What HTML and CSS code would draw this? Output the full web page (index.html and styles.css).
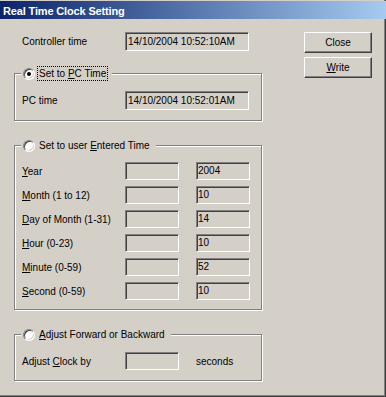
FILE: index.html
```html
<!DOCTYPE html>
<html>
<head>
<meta charset="utf-8">
<title>Real Time Clock Setting</title>
<link rel="stylesheet" href="styles.css">
</head>
<body>
<div class="window">
  <div class="titlebar">Real Time Clock Setting</div>
  <div class="content">
    <div class="main">
      <div class="row ctrl">
        <span class="lbl">Controller time</span>
        <div class="tb wide">14/10/2004 10:52:10AM</div>
      </div>

      <div class="group g1">
        <div class="legend">
          <span class="radio checked"></span>
          <span class="rlabel focus">Set to <u>P</u>C Time</span>
        </div>
        <div class="row first">
          <span class="lbl">PC time</span>
          <div class="tb wide">14/10/2004 10:52:01AM</div>
        </div>
      </div>

      <div class="group g2">
        <div class="legend">
          <span class="radio"></span>
          <span class="rlabel">Set to user <u>E</u>ntered Time</span>
        </div>
        <div class="fields">
          <div class="row"><span class="lbl"><u>Y</u>ear</span><div class="tb sm"></div><div class="tb sm val">2004</div></div>
          <div class="row"><span class="lbl"><u>M</u>onth (1 to 12)</span><div class="tb sm"></div><div class="tb sm val">10</div></div>
          <div class="row"><span class="lbl"><u>D</u>ay of Month (1-31)</span><div class="tb sm"></div><div class="tb sm val">14</div></div>
          <div class="row"><span class="lbl"><u>H</u>our (0-23)</span><div class="tb sm"></div><div class="tb sm val">10</div></div>
          <div class="row"><span class="lbl"><u>M</u>inute (0-59)</span><div class="tb sm"></div><div class="tb sm val">52</div></div>
          <div class="row"><span class="lbl"><u>S</u>econd (0-59)</span><div class="tb sm"></div><div class="tb sm val">10</div></div>
        </div>
      </div>

      <div class="group g3">
        <div class="legend">
          <span class="radio"></span>
          <span class="rlabel"><u>A</u>djust Forward or Backward</span>
        </div>
        <div class="row first">
          <span class="lbl">Adjust <u>C</u>lock by</span>
          <div class="tb sm"></div>
          <span class="unit">seconds</span>
        </div>
      </div>
    </div>

    <div class="buttons">
      <button class="btn" type="button">Close</button>
      <button class="btn" type="button"><u>W</u>rite</button>
    </div>
  </div>
</div>
</body>
</html>
```
FILE: styles.css
```css
* { box-sizing: border-box; }

html, body {
  margin: 0;
  padding: 0;
}

body {
  background: #d4d0c8;
  font-family: "Liberation Sans", Arial, sans-serif;
  font-size: 10px;
  color: #000;
  overflow: hidden;
}

.window {
  width: 386px;
  height: 397px;
  background: #d4d0c8;
  padding-top: 1px;
  box-shadow: inset -1px -1px 0 #404040, inset -2px -2px 0 #808080;
}

.titlebar {
  height: 18px;
  background: linear-gradient(to right, #0a246a, #a6caf0);
  color: #fff;
  font-weight: bold;
  font-size: 11px;
  line-height: 16px;
  padding: 2px 0 0 3px;
  letter-spacing: -0.15px;
  white-space: nowrap;
}

.content {
  display: flex;
  padding-top: 13px;
}

.main {
  width: 262px;
  padding-left: 14px;
  flex: none;
}

.row {
  display: flex;
  align-items: center;
  height: 18px;
}

.ctrl {
  padding-left: 8px;
  height: 19px;
}

.group .row {
  padding-left: 7px;
}

.lbl {
  width: 103px;
  flex: none;
  white-space: nowrap;
}

.tb {
  flex: none;
  height: 18px;
  background: #d4d0c8;
  border: 1px solid;
  border-color: #808080 #fff #fff #808080;
  box-shadow: inset 1px 1px 0 #404040, inset -1px -1px 0 #d4d0c8;
  white-space: nowrap;
  line-height: 16px;
}

.tb.wide {
  width: 124px;
  height: 19px;
  line-height: 17px;
  padding-left: 2px;
}

.tb.sm {
  width: 54px;
  padding-left: 1px;
}

.tb.val {
  margin-left: 17px;
}

.unit {
  margin-left: 17px;
}

.group {
  width: 248px;
  border: 1px solid #808080;
  box-shadow: 1px 1px 0 #fff, inset 1px 1px 0 #fff;
}

.g1 {
  margin-top: 22px;
  padding-bottom: 10px;
}

.g1 .row {
  height: 19px;
}

.g2 {
  margin-top: 24px;
  padding-bottom: 9px;
}

.g3 {
  margin-top: 24px;
  padding-bottom: 10px;
}

.legend {
  display: flex;
  align-items: center;
  width: max-content;
  height: 15px;
  margin: -8px 0 0 6px;
  padding: 0 4px 0 2px;
  background: #d4d0c8;
}

.row.first {
  margin-top: 10px;
}

.fields {
  margin-top: 9px;
  display: flex;
  flex-direction: column;
  gap: 6px;
}

.radio {
  width: 12px;
  height: 12px;
  flex: none;
  border-radius: 50%;
  background: #fff;
  border: 1px solid;
  border-color: #808080 #fff #fff #808080;
  box-shadow: inset 1px 1px 0 #404040, inset -1px -1px 0 #d4d0c8;
  display: flex;
  align-items: center;
  justify-content: center;
}

.radio.checked::after {
  content: "";
  width: 4px;
  height: 4px;
  border-radius: 50%;
  background: #000;
}

.rlabel {
  margin-left: 2px;
  padding: 0 1px;
  border: 1px dotted transparent;
  line-height: 13px;
  white-space: nowrap;
}

.rlabel.focus {
  border-color: #000;
}

.buttons {
  margin-left: 42px;
  display: flex;
  flex-direction: column;
  gap: 4px;
}

.btn {
  width: 68px;
  height: 21px;
  padding: 0;
  margin: 0;
  font: inherit;
  color: #000;
  background: #d4d0c8;
  border: 1px solid;
  border-color: #fff #404040 #404040 #fff;
  box-shadow: inset -1px -1px 0 #808080;
  border-radius: 0;
}

u {
  text-decoration: underline;
  text-underline-offset: 1px;
}
```
